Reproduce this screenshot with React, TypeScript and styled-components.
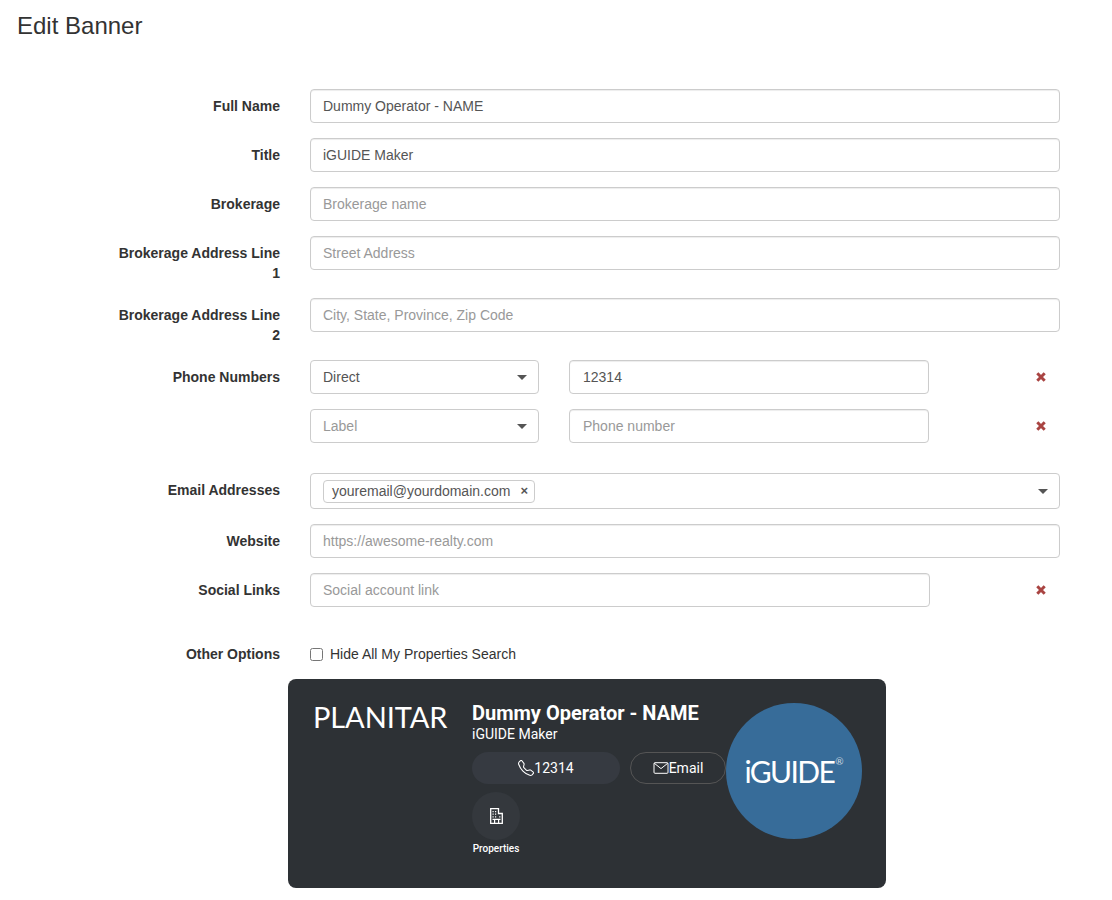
import styled, { createGlobalStyle } from "styled-components";
import { BsTelephone } from "react-icons/bs";

const GlobalStyle = createGlobalStyle`
    * {
        box-sizing: border-box;
    }

    body {
        margin: 0;
        background: #fff;
        color: #333;
        font-family: "Liberation Sans", Arial, sans-serif;
        font-size: 14px;
        line-height: 20px;
    }
`

const Cross = () => (
    <svg width="10" height="10" viewBox="0 0 10 10" aria-hidden="true">
        <path d="M1.3 1.3 8.7 8.7M8.7 1.3 1.3 8.7" stroke="#a94442" strokeWidth="3" fill="none"/>
    </svg>
)

const MailIcon = () => (
    <svg width="16" height="12" viewBox="0 0 16 12" fill="none" aria-hidden="true">
        <rect x="1" y="0.7" width="14" height="10.6" rx="1" stroke="#fff" strokeWidth="1"/>
        <path d="M1.2 1.2 8 6.6 14.8 1.2" stroke="#fff" strokeWidth="1"/>
    </svg>
)

const BuildingIcon = () => (
    <svg width="13" height="16" viewBox="0 0 13 16" fill="none" aria-hidden="true">
        <path d="M.7 15.3V.7h7.8v4.8h3.8v9.8z" stroke="#fff" strokeWidth="1.3"/>
        <path d="M2.5 3h1.2v1.2H2.5zM5 3h1.2v1.2H5zM2.5 5.6h1.2v1.2H2.5zM5 5.6h1.2v1.2H5zM2.5 8.2h1.2v1.2H2.5zM5 8.2h1.2v1.2H5zM9.2 8.2h1.2v1.2H9.2zM2.5 10.8h8v1.2h-8zM4 12h1.2v3H4zM8 12h1.2v3H8z" fill="#fff"/>
    </svg>
)

const TextRow = ({label, value, placeholder}: { label: string, value?: string, placeholder?: string }) => (
    <Row>
        <Label>{label}</Label>
        <Input defaultValue={value} placeholder={placeholder}/>
    </Row>
)

const PhoneRow = ({label, type, value}: { label?: string, type?: string, value?: string }) => (
    <Row>
        <Label>{label}</Label>
        <PhoneFields>
            <SelectBox $empty={!type}>
                {type || "Label"}
                <Caret/>
            </SelectBox>
            <PhoneInput defaultValue={value} placeholder="Phone number"/>
            <Remove><Cross/></Remove>
        </PhoneFields>
    </Row>
)

export default function App() {
    return (
        <Page>
            <GlobalStyle/>
            <Title>Edit Banner</Title>
            <Form>
                <TextRow label="Full Name" value="Dummy Operator - NAME"/>
                <TextRow label="Title" value="iGUIDE Maker"/>
                <TextRow label="Brokerage" placeholder="Brokerage name"/>
                <TextRow label="Brokerage Address Line 1" placeholder="Street Address"/>
                <TextRow label="Brokerage Address Line 2" placeholder="City, State, Province, Zip Code"/>
                <PhoneRow label="Phone Numbers" type="Direct" value="12314"/>
                <PhoneRow/>
                <Row $spaced>
                    <Label>Email Addresses</Label>
                    <TagBox>
                        <Tag>
                            youremail@yourdomain.com
                            <TagRemove>×</TagRemove>
                        </Tag>
                        <Caret/>
                    </TagBox>
                </Row>
                <TextRow label="Website" placeholder="https://awesome-realty.com"/>
                <Row>
                    <Label>Social Links</Label>
                    <SocialFields>
                        <Input placeholder="Social account link"/>
                        <Remove><Cross/></Remove>
                    </SocialFields>
                </Row>
                <Row $spaced>
                    <Label>Other Options</Label>
                    <CheckLabel>
                        <input type="checkbox"/>
                        Hide All My Properties Search
                    </CheckLabel>
                </Row>
            </Form>
            <Banner>
                <Logo>PLANITAR</Logo>
                <Info>
                    <Name>Dummy Operator - NAME</Name>
                    <Role>iGUIDE Maker</Role>
                    <Actions>
                        <PhoneButton><BsTelephone size={16}/>12314</PhoneButton>
                        <EmailButton><MailIcon/>Email</EmailButton>
                    </Actions>
                    <Shortcut>
                        <ShortcutIcon><BuildingIcon/></ShortcutIcon>
                        <ShortcutLabel>Properties</ShortcutLabel>
                    </Shortcut>
                </Info>
                <Badge>iGUIDE<sup>®</sup></Badge>
            </Banner>
        </Page>
    );
}

const Page = styled.div`
    padding: 0 52px 12px 0;
    width: 1112px;
`

const Title = styled.h1`
    margin: 0;
    padding: 11px 0 0 17px;
    height: 89px;
    font-size: 24px;
    font-weight: 400;
    line-height: 30px;
    color: #333;
`

const Form = styled.form`
    display: flex;
    flex-direction: column;
    gap: 15px;
`

const Row = styled.div<{ $spaced?: boolean }>`
    display: grid;
    grid-template-columns: 280px 1fr;
    column-gap: 30px;
    margin-top: ${({$spaced}) => ($spaced ? "15px" : "0")};
`

const Label = styled.label`
    padding: 7px 0 0 112px;
    font-weight: 700;
    text-align: right;
    color: #333;
`

const Input = styled.input`
    display: block;
    width: 100%;
    height: 34px;
    padding: 6px 12px;
    border: 1px solid #ccc;
    border-radius: 4px;
    box-shadow: inset 0 1px 1px rgba(0, 0, 0, .075);
    font: inherit;
    color: #555;
    outline: none;

    &::placeholder {
        color: #999;
        opacity: 1;
    }
`

const PhoneInput = styled(Input)`
    padding-left: 13px;
`

const PhoneFields = styled.div`
    display: grid;
    grid-template-columns: 229px 360px 1fr;
    column-gap: 30px;
    align-items: center;
`

const SocialFields = styled.div`
    display: grid;
    grid-template-columns: 620px 1fr;
    align-items: center;
`

const Remove = styled.span`
    display: flex;
    justify-content: flex-end;
    padding-right: 14px;
`

const SelectBox = styled.div<{ $empty?: boolean }>`
    display: flex;
    align-items: center;
    justify-content: space-between;
    height: 34px;
    padding: 0 11px 0 12px;
    border: 1px solid #ccc;
    border-radius: 4px;
    color: ${({$empty}) => ($empty ? "#999" : "#555")};
`

const Caret = styled.span`
    width: 0;
    height: 0;
    border-left: 5px solid transparent;
    border-right: 5px solid transparent;
    border-top: 5px solid #555;
`

const TagBox = styled.div`
    display: flex;
    align-items: center;
    justify-content: space-between;
    height: 36px;
    padding: 0 11px 0 12px;
    border: 1px solid #ccc;
    border-radius: 4px;
`

const Tag = styled.span`
    display: inline-flex;
    align-items: center;
    height: 23px;
    padding: 0 6px 0 8px;
    border: 1px solid #ccc;
    border-radius: 4px;
    color: #555;
`

const TagRemove = styled.span`
    margin-left: 10px;
    font-size: 13px;
    font-weight: 700;
    color: #555;
`

const CheckLabel = styled.label`
    display: flex;
    align-items: center;
    gap: 7px;
    height: 27px;
    padding-top: 7px;
    color: #333;

    input {
        width: 13px;
        height: 13px;
        margin: 0;
    }
`

const Banner = styled.section`
    display: flex;
    width: 598px;
    height: 209px;
    margin: 15px 0 0 288px;
    padding: 24px 24px 0 25px;
    border-radius: 8px;
    background: #2d3135;
    color: #fff;
    font-family: Roboto, sans-serif;
`

const Logo = styled.div`
    width: 159px;
    font-family: Lato, sans-serif;
    font-size: 29px;
    line-height: 28px;
    letter-spacing: -.1px;
`

const Info = styled.div`
    width: 254px;
`

const Name = styled.div`
    font-size: 20px;
    font-weight: 700;
    line-height: 20px;
`

const Role = styled.div`
    margin: 1px 0 8px;
    font-size: 14px;
    line-height: 20px;
`

const Actions = styled.div`
    display: flex;
    gap: 10px;
    margin-bottom: 8px;
`

const PhoneButton = styled.div`
    display: flex;
    align-items: center;
    justify-content: center;
    width: 148px;
    height: 32px;
    border-radius: 16px;
    background: #363a41;
`

const EmailButton = styled(PhoneButton)`
    width: 96px;
    border: 1px solid #555;
    background: none;
`

const Shortcut = styled.div`
    display: flex;
    flex-direction: column;
    align-items: center;
    width: 48px;
`

const ShortcutIcon = styled.div`
    display: flex;
    align-items: center;
    justify-content: center;
    width: 48px;
    height: 48px;
    border-radius: 50%;
    background: #34383d;
`

const ShortcutLabel = styled.div`
    margin-top: 2px;
    font-size: 10px;
    font-weight: 500;
    line-height: 14px;
    white-space: nowrap;
`

const Badge = styled.div`
    display: flex;
    align-items: center;
    justify-content: center;
    flex: none;
    width: 136px;
    height: 136px;
    border-radius: 50%;
    background: #376c99;
    font-family: Lato, sans-serif;
    font-size: 30px;
    font-weight: 400;
    letter-spacing: -1.6px;

    sup {
        align-self: flex-start;
        margin: 58px 0 0 1px;
        font-size: 10px;
        line-height: 0;
        letter-spacing: 0;
        opacity: .7;
    }
`
